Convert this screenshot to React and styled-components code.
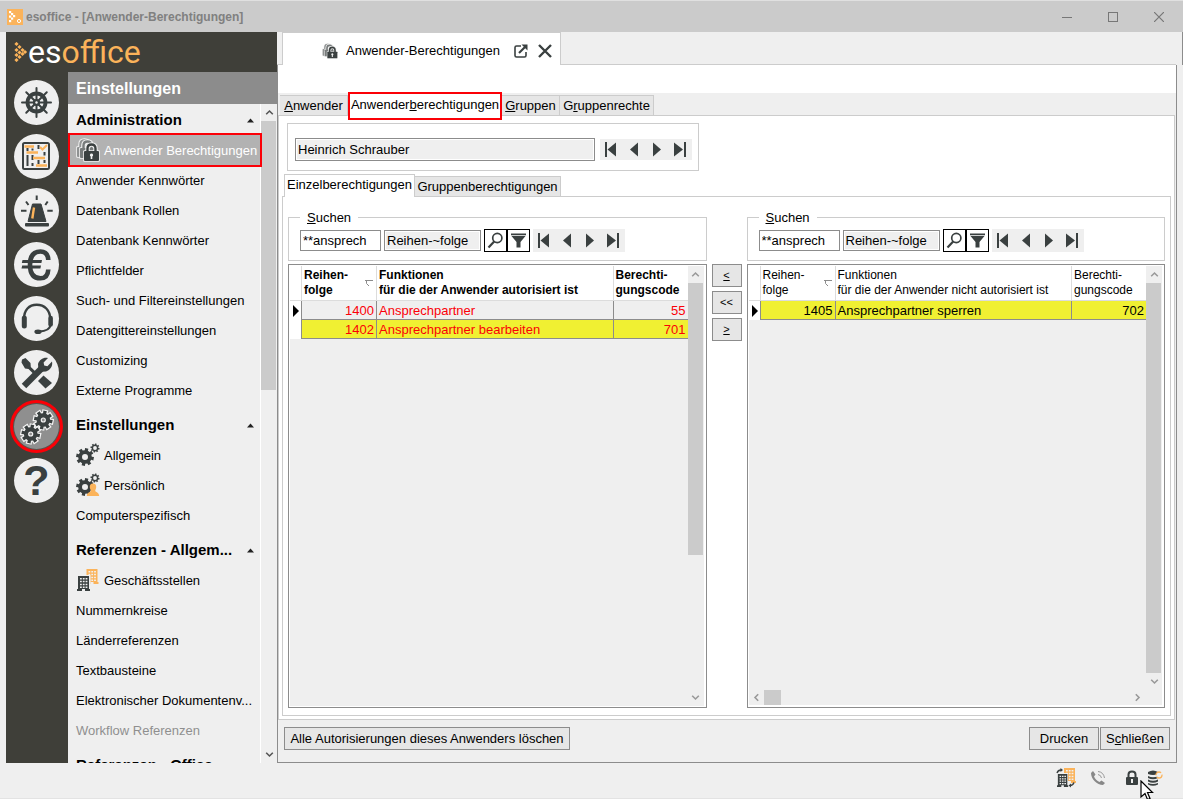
import React from "react";
import styled, { createGlobalStyle, css } from "styled-components";

const ink = "#3a4040";
const orange = "#fbb35a";
const line = "#cccccc";
const edge = "#8c8c8c";
const face = "#efefef";
const red = "#fb0007";

const GlobalStyle = createGlobalStyle`
  * { box-sizing: border-box; }
  html, body, #root { height: 100%; }
  body { margin: 0; overflow: hidden; background: ${face}; }
  body, button, input {
    font-family: "Liberation Sans", Arial, sans-serif;
    font-size: 13px;
    line-height: 15px;
    color: #000;
  }
  button { padding: 0; border: 0; background: none; cursor: default; }
  svg { display: block; flex: none; }
`;

/* ---------- icons ---------- */

function gearPath(cx, cy, outer, inner, hole, teeth = 8) {
  const step = (Math.PI * 2) / teeth;
  const at = (r, a) => `${(cx + r * Math.cos(a)).toFixed(2)} ${(cy + r * Math.sin(a)).toFixed(2)}`;
  let d = "";
  for (let i = 0; i < teeth; i++) {
    const a = i * step + 0.2;
    d += `${i ? "L" : "M"}${at(inner, a - step * 0.3)}L${at(outer, a - step * 0.24)}L${at(outer, a + step * 0.24)}L${at(inner, a + step * 0.3)}`;
  }
  return `${d}ZM${cx + hole} ${cy}A${hole} ${hole} 0 1 0 ${cx - hole} ${cy}A${hole} ${hole} 0 1 0 ${cx + hole} ${cy}Z`;
}

const Gear = ({ cx, cy, outer, inner, hole, fill = ink, ...rest }) => (
  <path d={gearPath(cx, cy, outer, inner, hole)} fill={fill} fillRule="evenodd" {...rest} />
);

const Round = ({ children }) => (
  <svg width="45" height="45" viewBox="0 0 45 45" fill="none" stroke={ink} aria-hidden="true">
    {children}
  </svg>
);

const WheelIcon = () => (
  <Round>
    <circle cx="22.5" cy="22.5" r="9" strokeWidth="3.8" />
    <circle cx="22.5" cy="22.5" r="3.6" fill={ink} stroke="none" />
    {[0, 45, 90, 135].map((a) => (
      <path key={a} d="M8 22.5H37" strokeWidth="2" strokeLinecap="round" transform={`rotate(${a} 22.5 22.5)`} />
    ))}
    <circle cx="22.5" cy="22.5" r="1.2" fill={face} stroke="none" />
  </Round>
);

const BoardIcon = () => (
  <Round>
    <rect x="9" y="9" width="26" height="26" rx="1.5" strokeWidth="2" />
    <path d="M13.5 14V17M13.5 21V32M18.5 14.5V16.5M18.5 21V26M18.5 29V32M24.5 11V15M24.5 26V30M30.5 18V21.5M30.5 26V29" strokeWidth="2" />
    <path d="M10.5 12.5H20M12.5 18.5H24M19 24H31M22 31.5H33" stroke={orange} strokeWidth="2.6" />
    <path d="M26 13L28.5 15.5L33 11" stroke={orange} strokeWidth="2" />
  </Round>
);

const SirenIcon = () => (
  <Round>
    <path d="M18.5 16H27L32 33.5H14Z" fill={ink} stroke={ink} strokeWidth="1" strokeLinejoin="round" />
    <rect x="11" y="35" width="24" height="3.6" rx="1" fill={ink} stroke="none" />
    <path d="M22.7 7.5V12M12 13.5L14.5 17M33.7 13.5L31.3 17M7 22.7H12.5M33.3 22.7H38.7" strokeWidth="2" />
    <path d="M20 19.5L18.3 30.5" stroke={orange} strokeWidth="2.4" />
  </Round>
);

const EuroIcon = () => (
  <Round>
    <path d="M34.3 18C34 12 31.2 9.5 26.5 9.5C19.5 9.5 16 14 16 22.7C16 31.5 19.5 36.3 26.5 36.3C31.2 36.3 34 33.5 34.3 27.5" strokeWidth="4.6" />
    <path d="M8.5 18H28L27.4 21H7.8ZM8.2 23.4H27L26.4 26.6H7.5Z" fill={ink} stroke="none" />
  </Round>
);

const HeadsetIcon = () => (
  <Round>
    <path d="M10 23C10 14 15 8.8 22.7 8.8C30.5 8.8 36 14 36.3 23" strokeWidth="2.4" />
    <path d="M10.3 22V30" strokeWidth="5" strokeLinecap="round" />
    <path d="M36.6 22V28.5" strokeWidth="4.6" strokeLinecap="round" />
    <path d="M36.5 29C36 33.5 32 35.2 25 35.6" strokeWidth="2.2" />
    <ellipse cx="24" cy="35.8" rx="3.6" ry="2.3" fill={ink} stroke="none" />
  </Round>
);

const ToolsIcon = () => (
  <Round>
    <path d="M8 9.5L11.5 8L16.5 13L16.8 17L21.5 21.5L19.3 23.7L14.5 19L11 18.5L7.5 12.5Z" fill={ink} stroke="none" />
    <path d="M29.5 25.5L38 33L31.5 38.5L24 31Z" fill={ink} stroke="none" />
    <path d="M10 36L28 18" strokeWidth="6.4" />
    <path d="M24.5 21L24 14C25.5 9.5 29.5 7 34 8L29.6 12.5L30.2 15.6L33.4 16.2L38 11.5C39 16 36.5 20 32 21.4L27 21.8Z" fill={ink} stroke="none" />
  </Round>
);

const outlined = { stroke: "#f4f4f4", strokeWidth: 2.4, paintOrder: "stroke" };

const GearsIcon = () => (
  <Round>
    <Gear cx={29.3} cy={16} outer={9.4} inner={6.8} hole={2.6} {...outlined} />
    <Gear cx={16.7} cy={30} outer={9.4} inner={6.8} hole={2.6} {...outlined} />
  </Round>
);

const HelpMark = styled.span`
  font-weight: bold;
  font-size: 43px;
  line-height: 45px;
  color: ${ink};
`;

const Lock = ({ x, y, color = ink, halo = "#f0f0f0" }) => (
  <g transform={`translate(${x} ${y})`}>
    <path d="M3.5 9V5.5C3.5 2.8 5.2 1.5 7.5 1.5S11.5 2.8 11.5 5.5V9" fill="none" stroke={halo} strokeWidth="4.4" />
    <rect x="-0.8" y="7.2" width="16.6" height="11.6" rx="1" fill={halo} />
    <path d="M3.5 9V5.5C3.5 2.8 5.2 1.5 7.5 1.5S11.5 2.8 11.5 5.5V9" fill="none" stroke={color} strokeWidth="2.4" />
    <rect x="0" y="8" width="15" height="10" rx="1" fill={color} />
    <path d="M7.5 10.5a1.6 1.6 0 0 1 .8 3V16H6.7V13.5a1.6 1.6 0 0 1 .8-3Z" fill={halo} />
  </g>
);

const LocksIcon = ({ size = 24 }) => (
  <svg width={size} height={size} viewBox="0 0 24 24" aria-hidden="true">
    <Lock x={1} y={1} color="#8f9292" />
    <Lock x={4} y={2} color="#777b7b" />
    <Lock x={8} y={5} />
  </svg>
);

const GearPairIcon = ({ person }) => (
  <svg width="24" height="24" viewBox="0 0 24 24" aria-hidden="true">
    <Gear cx={9} cy={14} outer={9} inner={6.8} hole={3} />
    <Gear cx={19} cy={5} outer={4.6} inner={3.4} hole={1.9} />
    {person && (
      <path d="M17 10.5C19.3 10.5 20.4 12 20.2 14.3C20.1 15.8 19.3 16.8 19.2 17.8C19.4 19.3 23 19 23.2 23H10.8C11 19 14.6 19.3 14.8 17.8C14.7 16.8 13.9 15.8 13.8 14.3C13.6 12 14.7 10.5 17 10.5Z" fill={orange} />
    )}
  </svg>
);

const Building = ({ x, y, color }) => (
  <g transform={`translate(${x} ${y})`}>
    <path d="M1 0H12V13H13V15H8V13H5V15H0V13H1Z" fill={color} />
    <path d="M3 2.8H10.4M3 5.6H10.4M3 8.4H10.4M3 11.2H10.4" stroke="#f0f0f0" strokeWidth="1.5" strokeDasharray="1.8 1" />
  </g>
);

const BuildingsIcon = () => (
  <svg width="24" height="24" viewBox="0 0 24 24" aria-hidden="true">
    <Building x={9.5} y={1} color={orange} />
    <rect x="1" y="7" width="13.5" height="16" fill={face} />
    <Building x={1} y={8} color={ink} />
  </svg>
);

const BrandDots = () => (
  <svg width="14" height="20" viewBox="0 0 14 20" fill={orange} aria-hidden="true">
    {[[2.5, 2], [5.5, 5], [8.5, 8], [2.5, 8], [11, 10], [5.5, 10.5], [8.5, 12], [2.5, 13], [5.5, 15], [2.5, 18]].map(([x, y]) => (
      <rect key={`${x}-${y}`} x={x - 1.5} y={y - 1.5} width="3" height="3" transform={`rotate(45 ${x} ${y})`} />
    ))}
  </svg>
);

const NavGlyph = ({ kind }) => (
  <svg width="15" height="15" viewBox="0 0 15 15" fill={ink} aria-hidden="true">
    {kind === "first" && <path d="M1 0H3V15H1ZM12 0.5V14.5L3.5 7.5Z" />}
    {kind === "prev" && <path d="M11 0.5V14.5L3 7.5Z" />}
    {kind === "next" && <path d="M3 0.5V14.5L11 7.5Z" />}
    {kind === "last" && <path d="M11 0H13V15H11ZM1 0.5V14.5L10 7.5Z" />}
  </svg>
);

const Chevron = ({ turn = 0, color = "#999999" }) => (
  <svg width="9" height="9" viewBox="0 0 9 9" fill="none" stroke={color} strokeWidth="1.6" aria-hidden="true">
    <path d="M1.2 6.2L4.5 3L7.8 6.2" transform={`rotate(${turn} 4.5 4.5)`} />
  </svg>
);

/* ---------- window ---------- */

const Window = styled.div`
  height: 100vh;
  display: flex;
  flex-direction: column;
  background: ${face};
  border-bottom: 1px solid #e3e3e3;
`;

const TitleBar = styled.header`
  flex: none;
  display: flex;
  align-items: center;
  height: 32px;
  padding: 0 1px 0 7px;
  background: #cbcbcb;
  border-top: 1px solid #e0e0e0;
`;

const AppBadge = styled.span`
  display: flex;
  width: 16px;
  height: 16px;
  background: ${orange};
`;

const Title = styled.h1`
  flex: 1;
  margin: 0 0 0 3px;
  font-size: 12px;
  line-height: 16px;
  color: #808080;
`;

const CaptionButton = styled.button`
  display: grid;
  place-items: center;
  width: 46px;
  height: 31px;
`;

const Body = styled.div`
  flex: 1;
  min-height: 0;
  display: flex;
  padding-left: 6px;
`;

/* ---------- sidebar ---------- */

const Sidebar = styled.aside`
  flex: none;
  width: 271px;
  display: flex;
  flex-direction: column;
  background: #3f3f39;
`;

const Logo = styled.div`
  flex: none;
  display: flex;
  align-items: center;
  height: 40px;
  padding-left: 8px;
  font-family: Roboto, sans-serif;
  font-weight: 400;
  font-size: 32px;
  line-height: 40px;
  color: #fff;
  b { font-weight: 400; color: ${orange}; }
`;

const SidebarBody = styled.div`
  flex: 1;
  min-height: 0;
  display: flex;
`;

const Rail = styled.nav`
  flex: none;
  width: 62px;
  display: flex;
  flex-direction: column;
  gap: 9px;
  padding: 8px 0 0 8px;
`;

const RailButton = styled.button`
  flex: none;
  display: grid;
  place-items: center;
  width: 45px;
  height: 45px;
  border-radius: 50%;
  background: ${(p) => (p.$active ? "#8f8f8f" : face)};
  ${(p) => p.$active && css`box-shadow: 0 0 0 1px #55554f, 0 0 0 4px ${red};`}
`;

const Menu = styled.div`
  flex: 1;
  min-width: 0;
  display: flex;
  flex-direction: column;
  background: ${face};
`;

const MenuTitle = styled.h2`
  flex: none;
  margin: 0;
  padding: 0 8px;
  height: 32px;
  background: #8c8c8c;
  color: #fff;
  font-size: 16px;
  line-height: 34px;
`;

const MenuBody = styled.div`
  flex: 1;
  min-height: 0;
  display: flex;
`;

const MenuList = styled.div`
  flex: 1;
  min-width: 0;
  overflow: hidden;
  margin-right: -2px;
  padding: 1px 2px 0;
`;

const Section = styled.section`
  margin-bottom: 5px;
`;

const SectionHead = styled.button`
  display: flex;
  align-items: center;
  justify-content: space-between;
  width: 100%;
  height: 30px;
  padding: 0 5px 0 6px;
  font-weight: bold;
  font-size: 15px;
  line-height: 20px;
`;

const MenuItem = styled.a`
  display: flex;
  align-items: center;
  gap: 4px;
  height: 30px;
  padding-left: 6px;
  white-space: nowrap;
  text-decoration: none;
  color: ${(p) => (p.$disabled ? "#8f8f8f" : "#000")};
  ${(p) => p.$active && css`
    position: relative;
    color: #fff;
    background: #b2b2b2;
    outline: 2px solid ${red};
  `}
`;

const ScrollTrack = styled.div`
  flex: none;
  display: flex;
  flex-direction: ${(p) => (p.$row ? "row" : "column")};
  align-items: center;
  justify-content: space-between;
  background: ${face};
  ${(p) => (p.$row ? "height: 15px;" : "width: 16px;")}
`;

const MenuTrack = styled(ScrollTrack)`
  width: 17px;
  border-left: 1px solid #fff;
`;

const ScrollArrow = styled.button`
  flex: none;
  display: grid;
  place-items: center;
  width: 15px;
  height: 17px;
`;

const ScrollLane = styled.div`
  flex: 1;
  display: flex;
  flex-direction: ${(p) => (p.$row ? "row" : "column")};
  align-self: stretch;
`;

const Thumb = styled.div`
  background: #cbcbcb;
  ${(p) => (p.$row
    ? css`width: 17px; height: 15px;`
    : css`width: 15px; height: ${p.$share}%;`)}
`;

/* ---------- document area ---------- */

const Main = styled.main`
  flex: 1;
  min-width: 0;
  display: flex;
  flex-direction: column;
`;

const DocumentStrip = styled.div`
  flex: none;
  display: flex;
  height: 33px;
  padding-right: 6px;
  border-right: 1px solid ${edge};
  &::before { content: ""; width: 5px; border-bottom: 1px solid ${line}; }
  &::after { content: ""; flex: 1; border-bottom: 1px solid ${line}; }
`;

const DocumentTab = styled.div`
  display: flex;
  align-items: center;
  padding: 3px 8px 0 39px;
  background: #fff;
  border: solid ${line};
  border-width: 1px 1px 0;
`;

const DocumentName = styled.span`
  margin: 0 14px 0 8px;
  white-space: nowrap;
`;

const IconButton = styled.button`
  display: grid;
  place-items: center;
  & + & { margin-left: 10px; }
`;

const Frame = styled.div`
  flex: 1;
  min-height: 0;
  display: flex;
  flex-direction: column;
  margin-right: 6px;
  border: solid ${edge};
  border-width: 0 1px 1px;
`;

const Spacer = styled.div`
  flex: none;
  height: 28px;
  background: #fff;
`;

const TabBar = styled.div`
  flex: none;
  display: flex;
  align-items: flex-end;
  height: 22px;
  padding-left: 2px;
  background: ${(p) => (p.$inner ? "#fff" : face)};
`;

const Tab = styled.button`
  width: ${(p) => p.$w}px;
  height: 20px;
  background: #e6e6e6;
  border: 1px solid ${line};
  border-width: 1px 1px 0 0;
  white-space: nowrap;
  ${(p) => p.$active && css`
    position: relative;
    height: 23px;
    margin-bottom: -1px;
    padding-bottom: 3px;
    background: #fff;
    border-left-width: 1px;
  `}
  ${(p) => p.$marked && css`
    height: 28px;
    margin-bottom: -5px;
    padding-bottom: 3px;
    border: 2px solid ${red};
  `}
`;

const Panel = styled.div`
  flex: 1;
  min-height: 0;
  display: flex;
  flex-direction: column;
  background: #fff;
  border: 1px solid ${line};
`;

const OuterPanel = styled(Panel)`
  margin-right: 1px;
  padding: 7px 3px 3px;
`;

const InnerPanel = styled(Panel)`
  display: grid;
  grid-template-columns: 1fr 30px 1fr;
  grid-template-rows: auto 1fr;
  gap: 3px 5px;
  padding: 13px 5px 7px;
`;

const PersonBox = styled.div`
  display: flex;
  align-items: center;
  align-self: flex-start;
  gap: 5px;
  margin: 0 0 3px 5px;
  padding: 14px 6px 9px 7px;
  border: 1px solid ${line};
`;

const Field = styled.input`
  width: ${(p) => p.$w}px;
  height: ${(p) => p.$h || 21}px;
  padding: 0 2px;
  border: 1px solid ${edge};
  border-radius: 0;
  outline: 0;
  background: ${(p) => (p.readOnly ? face : "#fff")};
  box-shadow: inset 0 0 0 1px #fff;
`;

const Pager = styled.div`
  display: flex;
  background: ${face};
`;

const PagerButton = styled.button`
  display: grid;
  place-items: center;
  width: 23px;
  height: ${(p) => p.$h}px;
`;

const SearchBox = styled.fieldset`
  grid-column: ${(p) => p.$col};
  grid-row: 1;
  display: flex;
  min-width: 0;
  margin: 0;
  padding: 4px 11px 8px;
  border: 1px solid ${line};
`;

const Legend = styled.legend`
  padding: 0 7px;
`;

const SearchRow = styled.div`
  display: flex;
  align-items: center;
  gap: 3px;
`;

const ToolPair = styled.div`
  display: flex;
`;

const ToolButton = styled.button`
  display: grid;
  place-items: center;
  width: 23px;
  height: 23px;
  border: 1px solid #000;
  background: #fff;
`;

const MoveColumn = styled.div`
  grid-column: 2;
  grid-row: 2;
  display: flex;
  flex-direction: column;
  gap: 4px;
`;

const PushButton = styled.button`
  width: ${(p) => p.$w}px;
  height: 23px;
  background: #e6e6e6;
  border: 1px solid ${edge};
  white-space: nowrap;
`;

const MoveButton = styled(PushButton)`
  font-size: 11px;
`;

const GridBox = styled.div`
  grid-column: ${(p) => p.$col};
  grid-row: 2;
  min-width: 0;
  display: flex;
  flex-direction: column;
  padding: 1px;
  border: 1px solid ${edge};
  background: #fff;
`;

const GridBody = styled.div`
  flex: 1;
  min-height: 0;
  display: flex;
`;

const GridSheet = styled.div`
  flex: 1;
  min-width: 0;
  background: ${face};
`;

const GridTrack = styled(ScrollTrack)`
  margin-right: 1px;
`;

const SideTrack = styled(ScrollTrack)`
  margin: 0 1px 1px 0;
  padding-right: 17px;
`;

const Table = styled.table`
  width: 100%;
  table-layout: fixed;
  border-collapse: separate;
  border-spacing: 0;
`;

const HeadCell = styled.th`
  height: 35px;
  padding: 2px 0 2px 2px;
  background: #fff;
  border-left: 1px solid #dcdcdc;
  border-bottom: 1px solid #dcdcdc;
  text-align: left;
  vertical-align: top;
  font-size: 12px;
  font-weight: ${(p) => (p.$bold ? "bold" : "normal")};
  white-space: nowrap;
  &:first-child { border-left: 0; }
`;

const HeadLabel = styled.span`
  display: flex;
  align-items: center;
  justify-content: space-between;
  padding-right: 3px;
`;

const Cell = styled.td`
  height: 19px;
  padding: 2px 2px 1px;
  border-left: 1px solid ${edge};
  border-bottom: 1px solid ${edge};
  text-align: ${(p) => (p.$number ? "right" : "left")};
  white-space: nowrap;
`;

const MarkerCell = styled.td`
  padding: 0 0 0 2px;
  background: #fff;
`;

const Row = styled.tr`
  color: ${(p) => (p.$granted ? red : "#000")};
  background: ${(p) => (p.$hit ? "#f0f032" : face)};
`;

const ActionBar = styled.div`
  flex: none;
  display: flex;
  gap: 1px;
  padding: 7px 6px 12px;
`;

const Grow = styled.span`
  flex: 1;
`;

const StatusBar = styled.footer`
  position: relative;
  flex: none;
  display: flex;
  align-items: center;
  justify-content: flex-end;
  height: 35px;
  padding: 0 18px 5px;
`;

const StatusIcon = styled.span`
  display: grid;
  place-items: center;
  width: 20px;
  margin-left: ${(p) => p.$gap}px;
`;

const Pointer = styled.svg`
  position: absolute;
  right: 29px;
  bottom: -3px;
`;

/* ---------- parts ---------- */

const sections = [
  {
    title: "Administration",
    items: [
      { text: "Anwender Berechtigungen", icon: <LocksIcon />, active: true },
      { text: "Anwender Kennwörter" },
      { text: "Datenbank Rollen" },
      { text: "Datenbank Kennwörter" },
      { text: "Pflichtfelder" },
      { text: "Such- und Filtereinstellungen" },
      { text: "Datengittereinstellungen" },
      { text: "Customizing" },
      { text: "Externe Programme" },
    ],
  },
  {
    title: "Einstellungen",
    items: [
      { text: "Allgemein", icon: <GearPairIcon /> },
      { text: "Persönlich", icon: <GearPairIcon person /> },
      { text: "Computerspezifisch" },
    ],
  },
  {
    title: "Referenzen - Allgem...",
    items: [
      { text: "Geschäftsstellen", icon: <BuildingsIcon /> },
      { text: "Nummernkreise" },
      { text: "Länderreferenzen" },
      { text: "Textbausteine" },
      { text: "Elektronischer Dokumentenv..." },
      { text: "Workflow Referenzen", disabled: true },
    ],
  },
  { title: "Referenzen - Office", items: [] },
];

const rail = [
  ["Steuerung", <WheelIcon />],
  ["Planung", <BoardIcon />],
  ["Alarm", <SirenIcon />],
  ["Finanzen", <EuroIcon />],
  ["Service", <HeadsetIcon />],
  ["Werkzeuge", <ToolsIcon />],
  ["Einstellungen", <GearsIcon />, true],
  ["Hilfe", <HelpMark>?</HelpMark>],
];

const pagerKinds = [
  ["first", "Erster"],
  ["prev", "Zurück"],
  ["next", "Weiter"],
  ["last", "Letzter"],
];

const RecordPager = ({ height }) => (
  <Pager>
    {pagerKinds.map(([kind, label]) => (
      <PagerButton key={kind} aria-label={label} $h={height}>
        <NavGlyph kind={kind} />
      </PagerButton>
    ))}
  </Pager>
);

const Search = ({ col }) => (
  <SearchBox $col={col}>
    <Legend><u>S</u>uchen</Legend>
    <SearchRow>
      <Field $w={81} defaultValue="**ansprech" aria-label="Suchbegriff" />
      <Field $w={97} defaultValue="Reihen-~folge" readOnly aria-label="Suchspalte" />
      <ToolPair>
        <ToolButton aria-label="Suchen">
          <svg width="17" height="17" viewBox="0 0 17 17" fill="none" stroke={ink}>
            <circle cx="10.3" cy="6" r="4.6" strokeWidth="1.7" />
            <path d="M7.2 9.5L1.5 15.5" strokeWidth="2.2" />
          </svg>
        </ToolButton>
        <ToolButton aria-label="Filtern">
          <svg width="17" height="17" viewBox="0 0 17 17" fill={ink}>
            <path d="M1 1.5H16V3.2H1ZM1.5 4H15.5L10.5 10V15.5H6.5V10Z" />
          </svg>
        </ToolButton>
      </ToolPair>
      <RecordPager height={23} />
    </SearchRow>
  </SearchBox>
);

const RightsGrid = ({ col, heading, bold, rows, share, sideways }) => (
  <GridBox $col={col}>
    <GridBody>
      <GridSheet>
        <Table>
          <colgroup>
            <col width="11" />
            <col width="75" />
            <col />
            <col width="75" />
          </colgroup>
          <thead>
            <tr>
              <HeadCell />
              <HeadCell $bold={bold}>
                <HeadLabel>
                  <span>Reihen-<br />folge</span>
                  <svg width="8" height="8" viewBox="0 0 8 8" fill="none" stroke="#8c8c8c"><path d="M0 1.5H8M1.5 2V4.5L4 7" /></svg>
                </HeadLabel>
              </HeadCell>
              <HeadCell $bold={bold}>Funktionen<br />{heading}</HeadCell>
              <HeadCell $bold={bold}>Berechti-<br />gungscode</HeadCell>
            </tr>
          </thead>
          <tbody>
            {rows.map((r, i) => (
              <Row key={r.order} $granted={r.granted} $hit={r.hit}>
                <MarkerCell>
                  {i === 0 && <svg width="7" height="12" viewBox="0 0 7 12"><path d="M1 0V12L7 6Z" /></svg>}
                </MarkerCell>
                <Cell $number>{r.order}</Cell>
                <Cell>{r.name}</Cell>
                <Cell $number>{r.code}</Cell>
              </Row>
            ))}
          </tbody>
        </Table>
      </GridSheet>
      <GridTrack>
        <ScrollArrow aria-label="Nach oben"><Chevron /></ScrollArrow>
        <ScrollLane><Thumb $share={share} /></ScrollLane>
        <ScrollArrow aria-label="Nach unten"><Chevron turn={180} /></ScrollArrow>
      </GridTrack>
    </GridBody>
    {sideways && (
      <SideTrack $row>
        <ScrollArrow aria-label="Nach links"><Chevron turn={270} /></ScrollArrow>
        <ScrollLane $row><Thumb $row /></ScrollLane>
        <ScrollArrow aria-label="Nach rechts"><Chevron turn={90} /></ScrollArrow>
      </SideTrack>
    )}
  </GridBox>
);

export default function App() {
  return (
    <>
      <GlobalStyle />
      <Window>
        <TitleBar>
          <AppBadge>
            <svg width="16" height="16" viewBox="0 0 16 16" aria-hidden="true">
              {[[3, 3], [5, 5], [7, 7], [3, 7.5], [5, 9.5], [3, 12]].map(([x, y]) => (
                <rect key={`${x}${y}`} x={x - 1} y={y - 1} width="2.2" height="2.2" fill="#fff" />
              ))}
              <circle cx="12" cy="12" r="1.6" fill="none" stroke="#fff" />
            </svg>
          </AppBadge>
          <Title>esoffice - [Anwender-Berechtigungen]</Title>
          <CaptionButton aria-label="Minimieren">
            <svg width="10" height="10"><path d="M0 5.5H10" stroke="#777" /></svg>
          </CaptionButton>
          <CaptionButton aria-label="Maximieren">
            <svg width="10" height="10"><rect x="0.5" y="0.5" width="9" height="9" fill="none" stroke="#777" /></svg>
          </CaptionButton>
          <CaptionButton aria-label="Fenster schließen">
            <svg width="10" height="10"><path d="M0 0L10 10M10 0L0 10" stroke="#777" strokeWidth="1.2" /></svg>
          </CaptionButton>
        </TitleBar>

        <Body>
          <Sidebar>
            <Logo>
              <BrandDots />
              <span>es<b>office</b></span>
            </Logo>
            <SidebarBody>
              <Rail>
                {rail.map(([label, icon, active]) => (
                  <RailButton key={label} aria-label={label} $active={active}>{icon}</RailButton>
                ))}
              </Rail>
              <Menu>
                <MenuTitle>Einstellungen</MenuTitle>
                <MenuBody>
                  <MenuList>
                    {sections.map((s) => (
                      <Section key={s.title}>
                        <SectionHead>
                          {s.title}
                          <svg width="9" height="5" viewBox="0 0 9 5"><path d="M1 4.5L4.5 0.5L8 4.5Z" fill="#222" /></svg>
                        </SectionHead>
                        {s.items.map((m) => (
                          <MenuItem key={m.text} href="#" $active={m.active} $disabled={m.disabled}>
                            {m.icon}
                            {m.text}
                          </MenuItem>
                        ))}
                      </Section>
                    ))}
                  </MenuList>
                  <MenuTrack>
                    <ScrollArrow aria-label="Nach oben"><Chevron color="#555" /></ScrollArrow>
                    <ScrollLane><Thumb $share={43} /></ScrollLane>
                    <ScrollArrow aria-label="Nach unten"><Chevron turn={180} color="#555" /></ScrollArrow>
                  </MenuTrack>
                </MenuBody>
              </Menu>
            </SidebarBody>
          </Sidebar>

          <Main>
            <DocumentStrip>
              <DocumentTab>
                <LocksIcon size={16} />
                <DocumentName>Anwender-Berechtigungen</DocumentName>
                <IconButton aria-label="In eigenem Fenster öffnen">
                  <svg width="14" height="14" viewBox="0 0 14 14" fill="none" stroke={ink}>
                    <path d="M7 2H2.5Q1 2 1 3.5V11.5Q1 13 2.5 13H10.5Q12 13 12 11.5V8" strokeWidth="1.6" />
                    <path d="M5 9L11 3" strokeWidth="2.2" />
                    <path d="M7.5 0.5H13.5V6.5Z" fill={ink} stroke="none" />
                  </svg>
                </IconButton>
                <IconButton aria-label="Register schließen">
                  <svg width="14" height="14" viewBox="0 0 14 14"><path d="M1 1L13 13M13 1L1 13" stroke={ink} strokeWidth="2.4" /></svg>
                </IconButton>
              </DocumentTab>
            </DocumentStrip>

            <Frame>
              <Spacer />
              <TabBar>
                <Tab $w={68}><u>A</u>nwender</Tab>
                <Tab $w={154} $active $marked>Anwender<u>b</u>erechtigungen</Tab>
                <Tab $w={58}><u>G</u>ruppen</Tab>
                <Tab $w={94}>G<u>r</u>uppenrechte</Tab>
              </TabBar>
              <OuterPanel>
                <PersonBox>
                  <Field $w={300} $h={23} defaultValue="Heinrich Schrauber" readOnly aria-label="Anwender" />
                  <RecordPager height={21} />
                </PersonBox>
                <TabBar $inner>
                  <Tab $w={131} $active>Einzelberechtigungen</Tab>
                  <Tab $w={146}>Gruppenberechtigungen</Tab>
                </TabBar>
                <InnerPanel>
                  <Search col={1} />
                  <RightsGrid
                    col={1}
                    bold
                    share={67}
                    heading="für die der Anwender autorisiert ist"
                    rows={[
                      { order: 1400, name: "Ansprechpartner", code: 55, granted: true },
                      { order: 1402, name: "Ansprechpartner bearbeiten", code: 701, granted: true, hit: true },
                    ]}
                  />
                  <MoveColumn>
                    <MoveButton $w={30}><u>&lt;</u></MoveButton>
                    <MoveButton $w={30}>&lt;&lt;</MoveButton>
                    <MoveButton $w={30}><u>&gt;</u></MoveButton>
                  </MoveColumn>
                  <Search col={3} />
                  <RightsGrid
                    col={3}
                    share={100}
                    sideways
                    heading="für die der Anwender nicht autorisiert ist"
                    rows={[{ order: 1405, name: "Ansprechpartner sperren", code: 702, hit: true }]}
                  />
                </InnerPanel>
              </OuterPanel>
              <ActionBar>
                <PushButton $w={286}>Alle Autorisierungen dieses Anwenders löschen</PushButton>
                <Grow />
                <PushButton $w={70}>Drucken</PushButton>
                <PushButton $w={70}>S<u>c</u>hließen</PushButton>
              </ActionBar>
            </Frame>
          </Main>
        </Body>

        <StatusBar>
          <StatusIcon $gap={0}>
            <svg width="20" height="20" viewBox="0 0 20 20" aria-hidden="true">
              <Building x={7} y={0} color={orange} />
              <rect x="0" y="5" width="12" height="15" fill={face} />
              <g transform="translate(1 6) scale(.86)"><Building x={0} y={0} color={ink} /></g>
              <path d="M1 5Q2 2 5 2M14 17.5Q17 17.5 18 14.5" fill="none" stroke={ink} strokeWidth="1.4" />
              <path d="M4.5 0L7 2L4.5 4ZM15 15.5L12.5 17.5L15 19.5Z" fill={ink} />
            </svg>
          </StatusIcon>
          <StatusIcon $gap={12}>
            <svg width="16" height="16" viewBox="0 0 16 16" fill="none" stroke="#999" aria-hidden="true">
              <path d="M3 1L1 3C1 9 7 15 13 15L15 13L11.5 10.5L9.5 12C7 11 5 9 4 6.5L5.5 4.5Z" fill="#888" stroke="none" />
              <path d="M8 4.5Q11 5 11.5 8M8 1.5Q13.5 2 14.5 8" />
            </svg>
          </StatusIcon>
          <StatusIcon $gap={14}>
            <svg width="12" height="16" viewBox="0 0 12 16" aria-hidden="true">
              <path d="M2.5 8V4.5Q2.5 1.5 6 1.5T9.5 4.5V8" fill="none" stroke={ink} strokeWidth="2" />
              <rect y="7" width="12" height="8" rx="1" fill={ink} />
              <path d="M6 9V13" stroke={face} strokeWidth="2" />
            </svg>
          </StatusIcon>
          <StatusIcon $gap={3}>
            <svg width="16" height="16" viewBox="0 0 16 16" aria-hidden="true">
              <path d="M1 2Q6 -1 11 2V4Q6 6 1 4ZM1 6Q6 8.5 11 6V8Q6 10.5 1 8ZM1 9.5Q6 12 11 9.5V11.5Q6 14 1 11.5ZM1 13Q6 15 11 13V14.5Q6 17 1 14.5Z" fill={ink} />
              <circle cx="12" cy="5" r="3" fill={face} stroke={orange} strokeWidth="1.3" strokeDasharray="7 2" />
            </svg>
          </StatusIcon>
          <Pointer width="14" height="21" viewBox="0 0 14 21" aria-hidden="true">
            <path d="M1 1V17L5 13.5L7.5 19.5L10 18.5L7.5 12.5H12.5Z" fill="#fff" stroke="#000" strokeWidth="1.2" />
          </Pointer>
        </StatusBar>
      </Window>
    </>
  );
}
